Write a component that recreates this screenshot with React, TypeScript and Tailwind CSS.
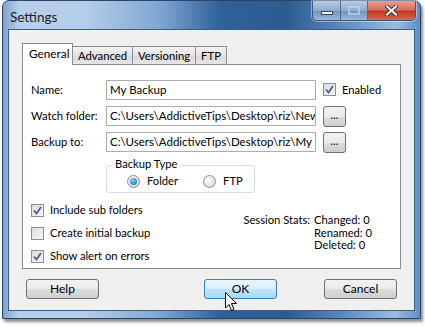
const TABS = ["General", "Advanced", "Versioning", "FTP"];

function CheckBox({ checked }: { checked?: boolean }) {
  return (
    <span className="w-[13px] h-[13px] border border-[#8f8f8f] bg-[linear-gradient(135deg,#dcdcdc,#f6f6f6)] flex items-center justify-center shrink-0">
      {checked && (
        <svg width="9" height="9" viewBox="0 0 9 9">
          <path d="M1 4.5 L3.5 7.5 L8 1" fill="none" stroke="#4a5f97" strokeWidth="1.8" />
        </svg>
      )}
    </span>
  );
}

function Radio({ checked }: { checked?: boolean }) {
  return (
    <span className="w-[13px] h-[13px] rounded-full border border-[#8f8f8f] bg-[radial-gradient(circle_at_40%_35%,#ffffff,#cfcfcf)] flex items-center justify-center shrink-0">
      {checked && (
        <span className="w-[7px] h-[7px] rounded-full bg-[radial-gradient(circle_at_40%_35%,#7fd1ff,#0f5da8)]" />
      )}
    </span>
  );
}

function Field({ value }: { value: string }) {
  return (
    <div className="w-[210px] h-[20px] shrink-0 border border-[#abadb3] bg-white px-[3px] overflow-hidden whitespace-nowrap leading-[18px] text-[11.5px]">
      {value}
    </div>
  );
}

function DotsButton() {
  return (
    <button className="w-[23px] h-[21px] rounded-[3px] border border-[#707070] bg-[linear-gradient(#f2f2f2_0%,#ebebeb_50%,#dddddd_51%,#cfcfcf_100%)] text-[11px] leading-[14px] pb-[4px] flex items-end justify-center">
      ...
    </button>
  );
}

function PushButton({ label, active }: { label: string; active?: boolean }) {
  return (
    <button
      className={
        active
          ? "w-[73px] h-[20px] rounded-[3px] border border-[#3c7fb1] bg-[linear-gradient(#eaf6fd_0%,#d9f0fc_50%,#bee6fd_51%,#a7d9f5_100%)] leading-[18px] text-[12px]"
          : "w-[73px] h-[20px] rounded-[3px] border border-[#707070] bg-[linear-gradient(#f2f2f2_0%,#ebebeb_50%,#dddddd_51%,#cfcfcf_100%)] leading-[18px] text-[12px]"
      }
    >
      {label}
    </button>
  );
}

export default function App() {
  return (
    <div className="w-[425px] h-[326px] bg-white text-[11.2px] text-black font-['Lato',sans-serif] relative overflow-hidden">
      {/* window frame */}
      <div className="ml-[2px] w-[419px] h-[319px] rounded-t-[7px] border border-[#29456a] shadow-[2px_3px_3px_rgba(0,0,0,0.45)] bg-[linear-gradient(90deg,#7fa4cf_0%,#b8cfe9_4%,#b4cde8_20%,#7ea5d2_38%,#2f6199_52%,#2c5b90_68%,#5f8cc0_82%,#9dbde0_94%,#5f8ec4_100%)] flex flex-col">
        {/* title bar */}
        <div className="h-[28px] flex items-start relative">
          <span className="ml-[7px] mt-[6px] text-[13.5px] leading-[20px] text-[#1e1e1e]">Settings</span>
          <div className="ml-auto mr-[4px] flex h-[20px] rounded-b-[5px] border border-t-0 border-[#3a5a80] overflow-hidden shadow-[0_0_0_1px_rgba(255,255,255,0.4)]">
            <div className="w-[28px] h-full bg-[linear-gradient(#b7cbe2,#8eacd0_50%,#6e90bb_51%,#9ab8da)] border-r border-[#4a6a90] flex items-center justify-center">
              <span className="w-[12px] h-[4px] bg-white border border-[#3a4a60] mt-[5px]" />
            </div>
            <div className="w-[27px] h-full bg-[linear-gradient(#b7cbe2,#8eacd0_50%,#6e90bb_51%,#9ab8da)] border-r border-[#4a6a90] flex items-center justify-center">
              <span className="w-[12px] h-[9px] border-[2px] border-[#c8d6e8] opacity-70" />
            </div>
            <div className="w-[47px] h-full bg-[linear-gradient(#eba092,#d8705e_45%,#c03a22_55%,#d8684c)] flex items-center justify-center">
              <svg width="13" height="11" viewBox="0 0 13 11">
                <path d="M2 1.5 L11 9.5 M11 1.5 L2 9.5" stroke="#3a3a3a" strokeWidth="4" strokeLinecap="square" />
                <path d="M2 1.5 L11 9.5 M11 1.5 L2 9.5" stroke="#ffffff" strokeWidth="2" strokeLinecap="square" />
              </svg>
            </div>
          </div>
        </div>

        {/* client area */}
        <div className="mx-[5px] h-[282px] bg-[#f0f0f0] border border-[#3c5d85] relative">
          <div className="ml-[13px] mt-[13px]">
            {/* tabs */}
            <div className="flex items-end h-[22px] relative z-10">
              {TABS.map((t, i) =>
                i === 0 ? (
                  <div key={t} className="h-[22px] px-[6px] border border-b-0 border-[#898c95] bg-white leading-[19px] w-[51px] text-[11.8px]">
                    {t}
                  </div>
                ) : (
                  <div key={t} className="h-[19px] px-[5px] border border-l-0 border-[#898c95] bg-[linear-gradient(#f3f3f3,#e3e3e3_50%,#d9d9d9_51%,#e6e6e6)] leading-[18px] text-[11.3px]">
                    {t}
                  </div>
                )
              )}
            </div>

            {/* panel */}
            <div className="w-[379px] h-[205px] -mt-px border border-[#898c95] bg-white pl-[8px] pt-[15px] relative">
              <div className="flex flex-col gap-[6px]">
                <div className="flex items-center h-[20px]">
                  <span className="w-[75px] shrink-0 whitespace-nowrap">Name:</span>
                  <Field value="My Backup" />
                  <span className="ml-[7px] flex items-center gap-[6px]">
                    <CheckBox checked />
                    Enabled
                  </span>
                </div>
                <div className="flex items-center h-[20px]">
                  <span className="w-[75px] shrink-0 whitespace-nowrap">Watch folder:</span>
                  <Field value="C:\Users\AddictiveTips\Desktop\riz\New Folder" />
                  <span className="ml-[7px]">
                    <DotsButton />
                  </span>
                </div>
                <div className="flex items-center h-[20px]">
                  <span className="w-[75px] shrink-0 whitespace-nowrap">Backup to:</span>
                  <Field value="C:\Users\AddictiveTips\Desktop\riz\My Backup" />
                  <span className="ml-[7px]">
                    <DotsButton />
                  </span>
                </div>
              </div>

              {/* backup type group */}
              <div className="ml-[75px] mt-[13px] w-[149px] h-[28px] border border-[#d5dfe5] rounded-[3px] relative">
                <span className="absolute -top-[10px] left-[5px] bg-white px-[3px] leading-[16px]">Backup Type</span>
                <div className="flex items-center pt-[7px] pl-[20px]">
                  <Radio checked />
                  <span className="ml-[7px]">Folder</span>
                  <span className="ml-[25px]">
                    <Radio />
                  </span>
                  <span className="ml-[7px]">FTP</span>
                </div>
              </div>

              {/* checkboxes + stats */}
              <div className="flex mt-[9px]">
                <div className="flex flex-col gap-[7px]">
                  <div className="flex items-center gap-[6px] h-[16px]">
                    <CheckBox checked />
                    Include sub folders
                  </div>
                  <div className="flex items-center gap-[6px] h-[16px]">
                    <CheckBox />
                    Create initial backup
                  </div>
                  <div className="flex items-center gap-[6px] h-[16px]">
                    <CheckBox checked />
                    Show alert on errors
                  </div>
                </div>
                <div className="ml-auto mr-[28px] mt-[12px] flex leading-[12.5px]">
                  <span className="mr-[4px]">Session Stats:</span>
                  <div className="flex flex-col">
                    <span>Changed: 0</span>
                    <span>Renamed: 0</span>
                    <span>Deleted: 0</span>
                  </div>
                </div>
              </div>
            </div>
          </div>

          {/* bottom buttons */}
          <div className="flex mt-[10px] pl-[17px]">
            <PushButton label="Help" />
            <span className="ml-[105px]">
              <PushButton label="OK" active />
            </span>
            <span className="ml-[47px]">
              <PushButton label="Cancel" />
            </span>
          </div>

          {/* mouse cursor */}
          <svg className="absolute left-[216px] top-[262px]" width="13" height="20" viewBox="0 0 13 20">
            <path d="M0.5 0.5 L0.5 16 L4 12.5 L6.5 18.5 L9 17.5 L6.5 11.5 L11.5 11.5 Z" fill="#ffffff" stroke="#000000" strokeWidth="1" />
          </svg>
        </div>
      </div>
    </div>
  );
}
